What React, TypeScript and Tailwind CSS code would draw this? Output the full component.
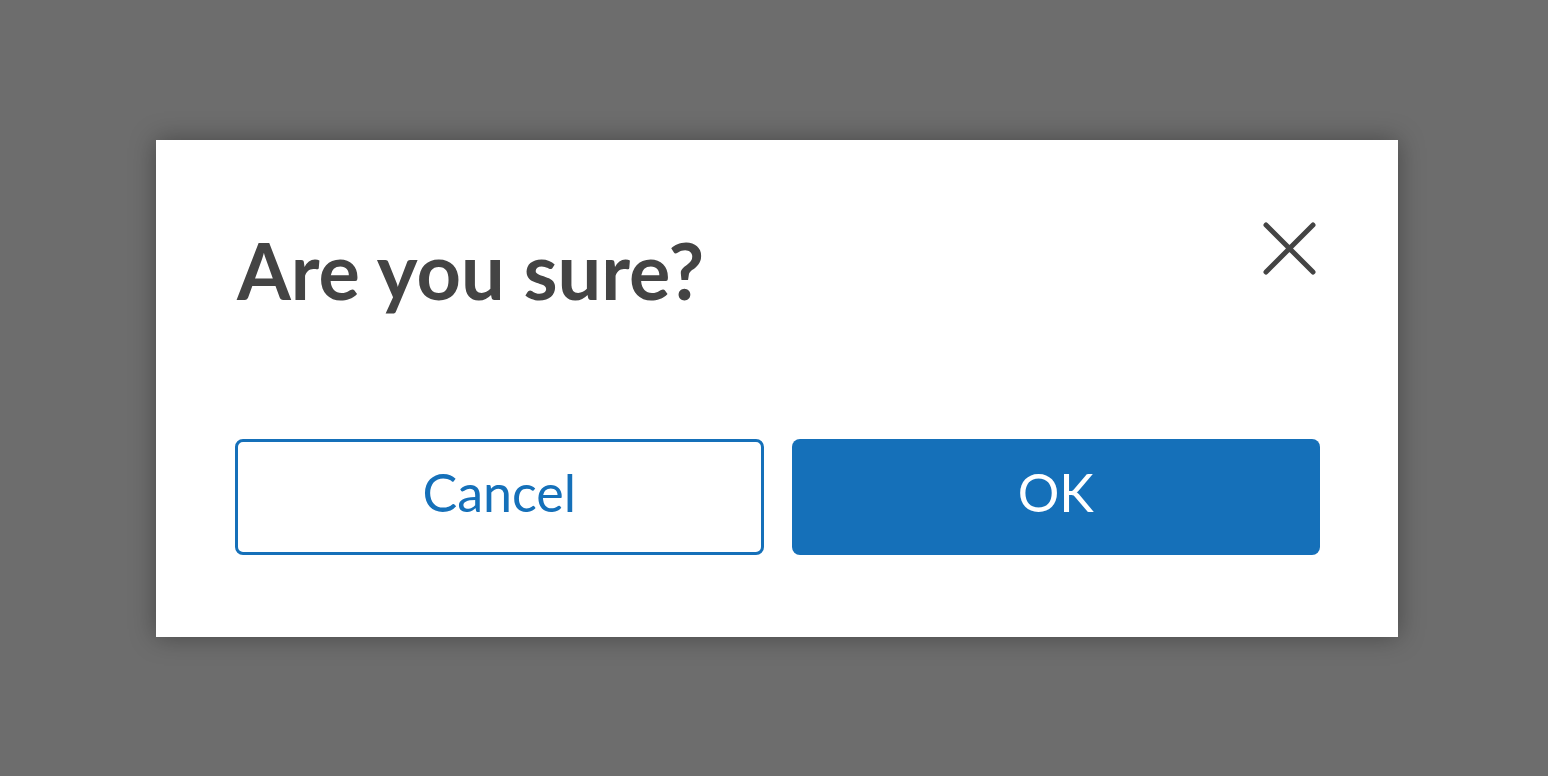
export default function App() {
  return (
    <div className="min-h-screen w-full bg-[#6d6d6d] flex justify-start pl-[156px] pt-[140px]" style={{ fontFamily: '"Lato", "Noto Sans", sans-serif' }}>
      <div className="w-[1242px] h-[497px] bg-white shadow-[0_0_24px_rgba(0,0,0,0.35)] pl-[79px] pr-[78px] flex flex-col">
        <div className="flex justify-between items-start">
          <h1 className="mt-[92px] ml-[2px] text-[77.5px] leading-none font-bold text-[#444444]">Are you sure?</h1>
          <svg className="mt-[79px] mr-[3px]" width="56" height="56" viewBox="0 0 56 56" fill="none">
            <path d="M5 6 L52 53 M52 6 L5 53" stroke="#444444" strokeWidth="5" strokeLinecap="round" />
          </svg>
        </div>
        <div className="mt-auto mb-[82px] grid grid-cols-2 gap-[28px]">
          <button className="h-[116px] pb-[10px] border-[3px] border-[#1570b9] rounded-[8px] bg-white text-[#1570b9] text-[52px] flex items-center justify-center">
            Cancel
          </button>
          <button className="h-[116px] pb-[10px] rounded-[8px] bg-[#1570b9] text-white text-[52px] flex items-center justify-center">
            OK
          </button>
        </div>
      </div>
    </div>
  );
}
